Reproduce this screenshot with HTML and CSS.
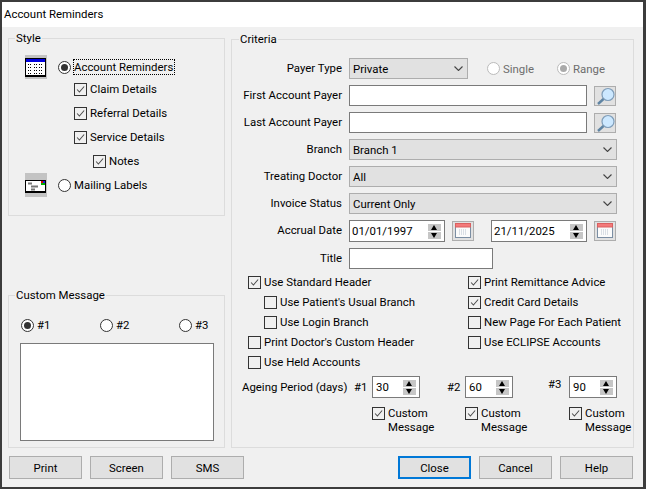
FILE: index.html
```html
<!DOCTYPE html>
<html lang="en">
<head>
  <meta charset="UTF-8">
  <meta name="viewport" content="width=device-width, initial-scale=1.0">
  <title>Account Reminders</title>
  <link rel="stylesheet" href="styles.css">
</head>
<body>
  <!-- shared icons -->
  <svg class="icon-defs" width="0" height="0">
    <symbol id="tick" viewBox="0 0 13 13">
      <path d="M2.5 6.5 L5.2 9.5 L10.8 3" fill="none" stroke="#4a4a4a" stroke-width="1.2"/>
    </symbol>
    <symbol id="chevron" viewBox="0 0 9 5">
      <path d="M0.5 0.5 L4.5 4.5 L8.5 0.5" fill="none" stroke="#444" stroke-width="1.1"/>
    </symbol>
    <symbol id="lens" viewBox="0 0 20 18">
      <circle cx="13" cy="7.5" r="6" fill="#cce8ff" stroke="#7f9db9" stroke-width="1.2"/>
      <path d="M8.5 12 L3 17" stroke="#5f84a3" stroke-width="2.4"/>
    </symbol>
    <symbol id="cal" viewBox="0 0 16 16">
      <rect x="0.5" y="0.5" width="15" height="14" fill="#fbfbfb" stroke="#7b8ea3"/>
      <rect x="0.5" y="0.5" width="15" height="3.5" fill="#f47a7a" stroke="#d96060"/>
      <path d="M4 7h8M4 9h8M4 11h8" stroke="#b9c3cf" stroke-dasharray="1 1"/>
    </symbol>
  </svg>

  <div class="window">
    <div class="title-bar">Account Reminders</div>

    <div class="dialog-body">
      <div class="left-col">
        <fieldset class="group style-group">
          <legend>Style</legend>
          <div class="style-row">
            <svg class="style-icon" width="22" height="24" viewBox="0 0 22 24">
              <rect width="22" height="24" fill="#c3c3c3"/>
              <rect x="0" y="3" width="21" height="19" fill="#000"/>
              <rect x="1" y="4" width="19" height="3" fill="#0000e0"/>
              <rect x="1" y="7" width="19" height="13" fill="#fff"/>
              <path d="M3 9.5h4M9 9.5h3M14 9.5h4M3 12.5h4M9 12.5h3M14 12.5h4M3 15.5h4M9 15.5h3M14 15.5h4M3 18.5h4M9 18.5h3M14 18.5h4" stroke="#000" stroke-dasharray="1 1"/>
            </svg>
            <span class="radio checked"></span>
            <span class="focus-label">Account Reminders</span>
          </div>
          <div class="style-checks">
            <div class="check"><svg class="box"><use href="#tick"/></svg>Claim Details</div>
            <div class="check"><svg class="box"><use href="#tick"/></svg>Referral Details</div>
            <div class="check"><svg class="box"><use href="#tick"/></svg>Service Details</div>
            <div class="check sub-notes"><svg class="box"><use href="#tick"/></svg>Notes</div>
          </div>
          <div class="style-row">
            <svg class="style-icon" width="22" height="24" viewBox="0 0 22 24">
              <rect width="22" height="24" fill="#c3c3c3"/>
              <rect x="0" y="7" width="21" height="13" fill="#000"/>
              <rect x="1" y="8" width="19" height="10" fill="#fff"/>
              <path d="M3 10.5h4M6 13.5h7M6 16.5h4" stroke="#777" stroke-width="2"/>
              <rect x="16" y="8" width="4" height="4" fill="#00b000"/>
              <rect x="16" y="8" width="2" height="2" fill="#e00000"/>
              <rect x="18" y="8" width="2" height="2" fill="#2020e0"/>
            </svg>
            <span class="radio"></span>
            <span class="plain-label">Mailing Labels</span>
          </div>
        </fieldset>

        <fieldset class="group message-group">
          <legend>Custom Message</legend>
          <div class="message-radios">
            <div class="radio-item"><span class="radio checked"></span>#1</div>
            <div class="radio-item"><span class="radio"></span>#2</div>
            <div class="radio-item"><span class="radio"></span>#3</div>
          </div>
          <div class="textbox message-box"></div>
        </fieldset>
      </div>

      <fieldset class="group criteria-group">
        <legend>Criteria</legend>

        <div class="form-row">
          <label class="field-label">Payer Type</label>
          <div class="select payer-select">Private<svg class="chevron"><use href="#chevron"/></svg></div>
          <div class="radio-item disabled single-radio"><span class="radio"></span>Single</div>
          <div class="radio-item disabled range-radio"><span class="radio checked"></span>Range</div>
        </div>
        <div class="form-row">
          <label class="field-label">First Account Payer</label>
          <div class="textbox payer-input"></div>
          <div class="icon-btn"><svg width="20" height="18"><use href="#lens"/></svg></div>
        </div>
        <div class="form-row">
          <label class="field-label">Last Account Payer</label>
          <div class="textbox payer-input"></div>
          <div class="icon-btn"><svg width="20" height="18"><use href="#lens"/></svg></div>
        </div>
        <div class="form-row">
          <label class="field-label">Branch</label>
          <div class="select wide-select">Branch 1<svg class="chevron"><use href="#chevron"/></svg></div>
        </div>
        <div class="form-row">
          <label class="field-label">Treating Doctor</label>
          <div class="select wide-select">All<svg class="chevron"><use href="#chevron"/></svg></div>
        </div>
        <div class="form-row">
          <label class="field-label">Invoice Status</label>
          <div class="select wide-select">Current Only<svg class="chevron"><use href="#chevron"/></svg></div>
        </div>
        <div class="form-row date-row">
          <label class="field-label">Accrual Date</label>
          <div class="textbox date-input">01/01/1997
            <div class="spinner"><span class="spin up"></span><span class="spin down"></span></div>
          </div>
          <div class="icon-btn"><svg width="16" height="16"><use href="#cal"/></svg></div>
          <div class="textbox date-input second-date">21/11/2025
            <div class="spinner"><span class="spin up"></span><span class="spin down"></span></div>
          </div>
          <div class="icon-btn"><svg width="16" height="16"><use href="#cal"/></svg></div>
        </div>
        <div class="form-row title-row">
          <label class="field-label">Title</label>
          <div class="textbox title-input"></div>
        </div>

        <div class="check-cols">
          <div class="check-col left-checks">
            <div class="check"><svg class="box"><use href="#tick"/></svg>Use Standard Header</div>
            <div class="check sub"><svg class="box"></svg>Use Patient's Usual Branch</div>
            <div class="check sub"><svg class="box"></svg>Use Login Branch</div>
            <div class="check"><svg class="box"></svg>Print Doctor's Custom Header</div>
            <div class="check"><svg class="box"></svg>Use Held Accounts</div>
          </div>
          <div class="check-col">
            <div class="check"><svg class="box"><use href="#tick"/></svg>Print Remittance Advice</div>
            <div class="check"><svg class="box"><use href="#tick"/></svg>Credit Card Details</div>
            <div class="check"><svg class="box"></svg>New Page For Each Patient</div>
            <div class="check"><svg class="box"></svg>Use ECLIPSE Accounts</div>
          </div>
        </div>

        <div class="ageing-row">
          <span class="ageing-label">Ageing Period (days)</span>
          <span class="age-num">#1</span>
          <div class="textbox age-input">30
            <div class="spinner"><span class="spin up"></span><span class="spin down"></span></div>
          </div>
          <span class="age-num num-2">#2</span>
          <div class="textbox age-input">60
            <div class="spinner"><span class="spin up"></span><span class="spin down"></span></div>
          </div>
          <span class="age-num num-3">#3</span>
          <div class="textbox age-input">90
            <div class="spinner"><span class="spin up"></span><span class="spin down"></span></div>
          </div>
        </div>

        <div class="custom-row">
          <div class="custom-check col-1"><svg class="box"><use href="#tick"/></svg><span>Custom<br>Message</span></div>
          <div class="custom-check col-2"><svg class="box"><use href="#tick"/></svg><span>Custom<br>Message</span></div>
          <div class="custom-check"><svg class="box"><use href="#tick"/></svg><span>Custom<br>Message</span></div>
        </div>
      </fieldset>
    </div>

    <div class="dialog-footer">
      <div class="btn-group">
        <button class="btn">Print</button>
        <button class="btn">Screen</button>
        <button class="btn">SMS</button>
      </div>
      <div class="btn-group">
        <button class="btn default">Close</button>
        <button class="btn">Cancel</button>
        <button class="btn">Help</button>
      </div>
    </div>
  </div>
</body>
</html>
```

FILE: styles.css
```css
* {
  box-sizing: border-box;
}

body {
  margin: 0;
  padding: 0;
  font-family: "Roboto", "Open Sans", sans-serif;
  font-size: 11.4px;
  color: #000;
  background-color: #3c3c3c;
}

.icon-defs {
  position: absolute;
}

.window {
  width: 646px;
  height: 489px;
  display: flex;
  flex-direction: column;
  overflow: hidden;
  background-color: #f0f0f0;
  border: 2px solid #3c3c3c;
  border-right-width: 3px;
}

.title-bar {
  height: 25px;
  line-height: 24px;
  padding-left: 2px;
  background-color: #fff;
}

.dialog-body {
  flex: 1;
  display: flex;
  gap: 6px;
  padding-left: 6px;
}

.left-col {
  width: 217px;
  display: flex;
  flex-direction: column;
  justify-content: space-between;
  padding-top: 3px;
}

/* group boxes */
.group {
  margin: 0;
  padding: 0;
  min-width: 0;
  border: 1px solid #dcdcdc;
}

.group legend {
  margin-left: 6px;
  padding: 0 1px;
  line-height: 16px;
}

.style-group {
  height: 186px;
  padding-top: 9px;
}

.message-group {
  height: 161px;
  padding-top: 15px;
}

.criteria-group {
  width: 403px;
  margin-top: 4px;
  padding-top: 11px;
}

.criteria-group legend {
  margin-left: 7px;
}

/* radios and checks */
.radio {
  flex: none;
  display: inline-block;
  position: relative;
  width: 13px;
  height: 13px;
  margin-right: 3px;
  border: 1px solid #333;
  border-radius: 50%;
  background-color: #fff;
}

.radio.checked::after {
  content: "";
  position: absolute;
  top: 2px;
  left: 2px;
  width: 7px;
  height: 7px;
  border-radius: 50%;
  background-color: #333;
}

.box {
  flex: none;
  width: 13px;
  height: 13px;
  margin-right: 3px;
  border: 1px solid #333;
}

.check {
  height: 20px;
  display: flex;
  align-items: center;
}

.radio-item {
  display: flex;
  align-items: center;
}

.radio-item.disabled {
  color: #6d6d6d;
}

.radio-item.disabled .radio {
  border-color: #bbb;
}

.radio-item.disabled .radio.checked::after {
  background-color: #aaa;
}

/* style group */
.style-row {
  height: 24px;
  display: flex;
  align-items: center;
  padding-left: 16px;
}

.style-icon {
  flex: none;
  margin-right: 11px;
}

.focus-label {
  margin-left: -1px;
  padding-right: 1px;
  line-height: 14px;
  border: 1px dotted #000;
}

.style-checks {
  display: flex;
  flex-direction: column;
  gap: 4px;
  margin-bottom: 2px;
  padding-left: 65px;
}

.sub-notes {
  margin-left: 19px;
}

/* custom message group */
.message-radios {
  display: grid;
  grid-template-columns: 79px 79px 1fr;
  height: 14px;
  padding-left: 12px;
}

.textbox {
  background-color: #fff;
  border: 1px solid #7a7a7a;
}

.message-box {
  width: 194px;
  height: 98px;
  margin: 11px 0 0 11px;
}

/* criteria rows */
.form-row {
  height: 21px;
  display: flex;
  align-items: center;
  margin-bottom: 6px;
}

.field-label {
  flex: none;
  width: 110px;
  margin: 0 7px 2px 0;
  text-align: right;
}

.select {
  height: 21px;
  display: flex;
  align-items: center;
  justify-content: space-between;
  padding: 0 4px 0 3px;
  background-color: #e1e1e1;
  border: 1px solid #adadad;
}

.chevron {
  width: 9px;
  height: 5px;
}

.payer-select {
  width: 119px;
}

.wide-select {
  width: 268px;
}

.single-radio {
  margin-left: 19px;
}

.range-radio {
  margin-left: 23px;
}

.payer-input {
  width: 238px;
  height: 21px;
}

.icon-btn {
  flex: none;
  width: 22px;
  height: 20px;
  margin-left: 7px;
  display: flex;
  align-items: center;
  justify-content: center;
  background-color: #e1e1e1;
  border: 1px solid #adadad;
}

.date-row {
  height: 22px;
}

.date-input {
  width: 96px;
  height: 22px;
  display: flex;
  align-items: center;
  justify-content: space-between;
  padding: 0 3px 0 2px;
}

.second-date {
  margin-left: 17px;
}

.spinner {
  display: flex;
  flex-direction: column;
  gap: 1px;
}

.spin {
  position: relative;
  display: block;
  width: 13px;
  height: 7px;
  background-color: #c6c6c6;
}

.spin::after {
  content: "";
  position: absolute;
  left: 3px;
  border-left: 3.5px solid transparent;
  border-right: 3.5px solid transparent;
}

.spin.up::after {
  top: 1px;
  border-bottom: 5px solid #000;
}

.spin.down::after {
  top: 1px;
  border-top: 5px solid #000;
}

.title-input {
  width: 144px;
  height: 21px;
}

.title-row {
  margin-bottom: 3px;
}

/* check columns */
.check-cols {
  display: flex;
}

.left-checks {
  width: 236px;
  padding-left: 16px;
}

.check.sub {
  margin-left: 16px;
}

/* ageing row */
.ageing-row {
  display: flex;
  align-items: center;
  height: 22px;
  margin-top: 4px;
  padding-left: 10px;
}

.ageing-label {
  width: 112px;
  margin-bottom: 1px;
}

.age-num {
  width: 18px;
  margin-bottom: 1px;
}

.num-2 {
  margin-left: 27px;
}

.num-3 {
  width: 21px;
  margin-left: 35px;
  margin-bottom: 6px;
}

.age-input {
  width: 48px;
  height: 22px;
  display: flex;
  align-items: center;
  justify-content: space-between;
  padding: 0 3px;
}

.custom-row {
  display: flex;
  margin-top: 9px;
  padding-left: 140px;
}

.custom-check {
  display: flex;
  align-items: flex-start;
  line-height: 14px;
}

.custom-check span {
  margin-top: -1px;
}

.col-1 {
  width: 93px;
}

.col-2 {
  width: 104px;
}

/* footer buttons */
.dialog-footer {
  display: flex;
  justify-content: space-between;
  height: 23px;
  margin: 8px 0;
  padding: 0 10px 0 7px;
}

.btn-group {
  display: flex;
  gap: 8px;
}

.btn {
  width: 73px;
  height: 23px;
  padding: 0;
  font: inherit;
  color: #000;
  background-color: #e1e1e1;
  border: 1px solid #adadad;
}

.btn.default {
  border: 2px solid #0078d7;
}
```
